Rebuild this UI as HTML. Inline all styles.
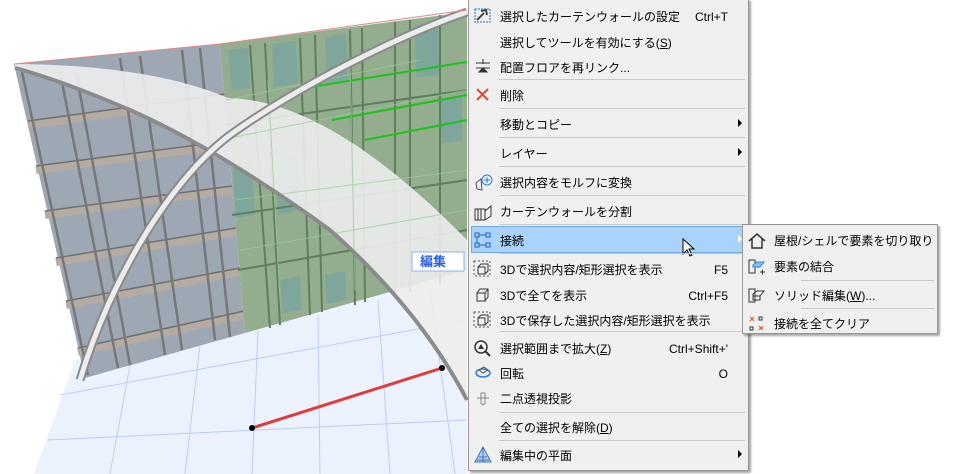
<!DOCTYPE html>
<html><head><meta charset="utf-8"><style>
*{margin:0;padding:0;box-sizing:border-box}
body{width:958px;height:474px;overflow:hidden;background:#fff;position:relative;font-family:"Liberation Sans","Noto Sans CJK JP",sans-serif;font-size:12px;color:#000}
.menu{position:absolute;left:468px;top:-1px;width:281px;height:472px;background:#f0f0f0;border:1px solid #979797;box-shadow:2px 2px 2px rgba(0,0,0,.35)}
.it{position:absolute;left:31px;white-space:nowrap;line-height:16px}
.sc{position:absolute;right:20px;white-space:nowrap;line-height:16px}
.sep{position:absolute;left:30px;right:3px;height:1px;background:#c8c8c8}
.arr{position:absolute;right:6px;width:0;height:0;border-left:4px solid #000;border-top:4px solid transparent;border-bottom:4px solid transparent}
.hl{position:absolute;left:2px;right:2px;top:226px;height:27px;background:#a9d3fb;border:1px solid #70a9e6}
.ic{position:absolute;left:4px}
.sub{position:absolute;left:742px;top:224px;width:196px;height:110px;background:#f0f0f0;border:1px solid #979797;box-shadow:2px 2px 2px rgba(0,0,0,.35)}
</style></head><body>
<svg width="470" height="474" style="position:absolute;left:0;top:0">
<polygon points="75,360 467,255 467,474 34,474" fill="#edf3fe"/>
<g stroke="#b9cdf5" stroke-width="1" fill="none">
<line x1="60" y1="395" x2="467" y2="320"/><line x1="48" y1="440" x2="467" y2="420"/>
<line x1="130" y1="365" x2="110" y2="474"/><line x1="200" y1="345" x2="185" y2="474"/>
<line x1="258" y1="330" x2="252" y2="474"/><line x1="318" y1="315" x2="320" y2="474"/>
<line x1="378" y1="300" x2="390" y2="474"/><line x1="430" y1="290" x2="455" y2="474"/>
</g>
<polygon points="14,64 220,44 245,333 85,378" fill="#9ea8b5"/>
<g stroke="#b4aca2" stroke-width="8">
<line x1="28" y1="125" x2="225" y2="98"/><line x1="36" y1="170" x2="228" y2="145"/>
<line x1="45" y1="215" x2="232" y2="190"/><line x1="56" y1="262" x2="236" y2="232"/><line x1="66" y1="305" x2="240" y2="272"/><line x1="78" y1="352" x2="244" y2="315"/>
</g>
<g stroke="#6f6f6f" stroke-width="1.5">
<line x1="28" y1="121" x2="225" y2="94"/><line x1="36" y1="166" x2="228" y2="141"/><line x1="45" y1="211" x2="232" y2="186"/><line x1="56" y1="258" x2="236" y2="228"/><line x1="66" y1="301" x2="240" y2="268"/><line x1="78" y1="348" x2="244" y2="311"/>
</g>
<g stroke="#777" stroke-width="2.5">
<line x1="22" y1="72" x2="88" y2="375"/><line x1="60" y1="72" x2="118" y2="368"/><line x1="76" y1="72" x2="130" y2="365"/>
<line x1="120" y1="58" x2="165" y2="355"/><line x1="140" y1="56" x2="182" y2="350"/><line x1="182" y1="50" x2="215" y2="340"/><line x1="200" y1="48" x2="230" y2="337"/>
</g>
<polygon points="220,44 467,12 467,270 245,333" fill="#93ad8e"/>
<g fill="#7fa69c">
<polygon points="228,50 248,48 250,88 232,90"/><polygon points="272,44 296,41 298,84 274,86"/><polygon points="325,37 346,34 348,80 327,82"/><polygon points="415,26 438,23 439,75 416,77"/>
<polygon points="233,168 252,165 255,215 236,218"/><polygon points="275,160 298,156 300,210 278,214"/><polygon points="325,275 345,271 346,300 326,304"/><polygon points="280,280 300,276 302,310 283,313"/>
<polygon points="440,100 462,96 462,140 441,144"/>
</g>
<g stroke="#5f7f5c" stroke-width="2">
<line x1="250" y1="45" x2="270" y2="328"/><line x1="265" y1="43" x2="280" y2="325"/><line x1="300" y1="38" x2="310" y2="315"/>
<line x1="315" y1="35" x2="322" y2="312"/><line x1="350" y1="30" x2="355" y2="305"/><line x1="362" y1="28" x2="365" y2="302"/>
<line x1="395" y1="22" x2="395" y2="295"/><line x1="410" y1="20" x2="410" y2="292"/><line x1="440" y1="15" x2="440" y2="285"/>
<line x1="225" y1="125" x2="467" y2="90"/><line x1="232" y1="215" x2="467" y2="180"/><line x1="238" y1="270" x2="467" y2="230"/>
</g>
<g stroke="#1bc41b" stroke-width="2"><line x1="292" y1="90" x2="467" y2="62"/><line x1="332" y1="120" x2="467" y2="95"/><line x1="365" y1="140" x2="467" y2="120"/><line x1="233" y1="165" x2="250" y2="162"/></g>
<path d="M15,64 Q150,65 228,98 Q330,100 467,240 L467,400 Q420,310 330,230 Q220,150 130,110 Q60,80 15,68Z" fill="#ededed" opacity="0.9"/>
<g stroke="#9c9" stroke-width="1" opacity=".7"><line x1="226" y1="100" x2="420" y2="60"/><line x1="230" y1="138" x2="467" y2="90"/><line x1="235" y1="200" x2="467" y2="170"/><line x1="240" y1="250" x2="467" y2="210"/><line x1="268" y1="80" x2="280" y2="300"/><line x1="350" y1="60" x2="355" y2="290"/></g>
<path d="M15,68 Q60,80 130,110 Q220,150 330,230 Q420,310 467,400" fill="none" stroke="#8b8b8b" stroke-width="4"/>
<path d="M80,380 C110,280 170,180 230,135 C300,85 400,35 467,12" fill="none" stroke="#8b8b8b" stroke-width="9"/>
<path d="M80,380 C110,280 170,180 230,135 C300,85 400,35 467,12" fill="none" stroke="#ececec" stroke-width="5"/>
<path d="M14,64 L220,44 L467,10" fill="none" stroke="#d88" stroke-width="1"/>
<rect x="412" y="252" width="52" height="19" fill="#fff" stroke="#8fb0f0"/>
<text x="420" y="266" font-size="13" fill="#2a5fd8" font-family="Noto Sans CJK JP,sans-serif" font-weight="bold">編集</text>
<line x1="252" y1="428" x2="442" y2="368" stroke="#e03c3c" stroke-width="3"/>
<circle cx="252" cy="428" r="3" fill="#000"/><circle cx="442" cy="368" r="3" fill="#000"/>
</svg>

<div class="menu">
<div class="hl"></div>
<svg class="ic" style="top:6px" width="20" height="20"><rect x="2" y="3" width="15" height="13" fill="none" stroke="#1c6fd0" stroke-dasharray="2,1"/><path d="M4,14 L11,7 M8,5 L13,4 L14,9" stroke="#444" stroke-width="2" fill="none"/></svg>
<div class="it" style="top:9px">選択したカーテンウォールの設定</div><div class="sc" style="top:9px">Ctrl+T</div>
<div class="it" style="top:35px">選択してツールを有効にする(<u>S</u>)</div>
<svg class="ic" style="top:58px" width="20" height="18"><path d="M3,5 H17 M10,1 V6 M3,10 H17 M6,14 H14 L10,10Z" stroke="#333" fill="#333"/></svg>
<div class="it" style="top:60px">配置フロアを再リンク...</div>
<div class="sep" style="top:79px"></div>
<svg class="ic" style="top:87px" width="20" height="16"><path d="M4,2 L15,13 M15,2 L4,13" stroke="#e8452c" stroke-width="2"/></svg>
<div class="it" style="top:88px">削除</div>
<div class="sep" style="top:108px"></div>
<div class="it" style="top:117px">移動とコピー</div><div class="arr" style="top:119px"></div>
<div class="sep" style="top:137px"></div>
<div class="it" style="top:146px">レイヤー</div><div class="arr" style="top:148px"></div>
<div class="sep" style="top:166px"></div>
<svg class="ic" style="top:173px" width="22" height="20"><circle cx="14" cy="7" r="5" fill="none" stroke="#2a7de0"/><path d="M14,4V10M11,7H17" stroke="#2a7de0"/><path d="M3,10 L8,6 L9,17 L4,16Z" fill="none" stroke="#555"/></svg>
<div class="it" style="top:175px">選択内容をモルフに変換</div>
<div class="sep" style="top:195px"></div>
<svg class="ic" style="top:203px" width="22" height="18"><path d="M2,6 H12 V17 H2Z M5,6 V17 M8,6V17 M12,8 L18,3 V13 L12,17" fill="none" stroke="#333"/></svg>
<div class="it" style="top:204px">カーテンウォールを分割</div>
<div class="sep" style="top:224px"></div>
<svg class="ic" style="top:231px" width="20" height="18"><rect x="2" y="2" width="4" height="4" fill="none" stroke="#1c5fb8"/><rect x="13" y="2" width="4" height="4" fill="none" stroke="#1c5fb8"/><rect x="2" y="12" width="4" height="4" fill="none" stroke="#1c5fb8"/><rect x="13" y="12" width="4" height="4" fill="none" stroke="#1c5fb8"/><path d="M6,4H13M4,6V12M6,14H13" stroke="#1c5fb8"/></svg>
<div class="it" style="top:233px">接続</div><div class="arr" style="top:235px;border-left-color:#fff"></div>
<svg style="position:absolute;left:213px;top:238px" width="14" height="20"><path d="M1,1 V16 L5,12 L8,18 L10,17 L7,11 H12Z" fill="#fff" stroke="#000"/></svg>
<div class="sep" style="top:253px"></div>
<svg class="ic" style="top:260px" width="20" height="18"><rect x="1" y="1" width="16" height="15" fill="none" stroke="#555" stroke-dasharray="2,2"/><path d="M5,7 H12 V14 H5Z M5,7 L8,4 H15 V11 L12,14" fill="none" stroke="#333"/></svg>
<div class="it" style="top:262px">3Dで選択内容/矩形選択を表示</div><div class="sc" style="top:262px">F5</div>
<svg class="ic" style="top:286px" width="20" height="18"><path d="M4,7 H12 V15 H4Z M4,7 L7,3 H15 V11 L12,15 M12,7 L15,3" fill="none" stroke="#333"/></svg>
<div class="it" style="top:288px">3Dで全てを表示</div><div class="sc" style="top:288px">Ctrl+F5</div>
<svg class="ic" style="top:311px" width="20" height="18"><rect x="1" y="1" width="16" height="15" fill="none" stroke="#555" stroke-dasharray="2,2"/><path d="M5,7 H12 V14 H5Z M5,7 L8,4 H15 V11 L12,14" fill="none" stroke="#333"/></svg>
<div class="it" style="top:313px">3Dで保存した選択内容/矩形選択を表示</div>
<div class="sep" style="top:331px"></div>
<svg class="ic" style="top:339px" width="20" height="20"><circle cx="8" cy="8" r="6" fill="none" stroke="#333" stroke-width="1.5"/><path d="M12,12 L17,17" stroke="#333" stroke-width="2"/><path d="M8,5 L5,10 H11Z" fill="#333"/></svg>
<div class="it" style="top:341px">選択範囲まで拡大(<u>Z</u>)</div><div class="sc" style="top:341px">Ctrl+Shift+'</div>
<svg class="ic" style="top:364px" width="20" height="18"><ellipse cx="10" cy="9" rx="7" ry="4" fill="none" stroke="#2a7de0" stroke-width="1.5"/><path d="M6,6 L11,3 L15,6 L10,9Z" fill="none" stroke="#555"/></svg>
<div class="it" style="top:366px">回転</div><div class="sc" style="top:366px">O</div>
<svg class="ic" style="top:389px" width="20" height="18"><path d="M4,9 H16 M8,4 V14 L10,16 L12,14 V4Z" fill="none" stroke="#888"/></svg>
<div class="it" style="top:391px">二点透視投影</div>
<div class="sep" style="top:412px"></div>
<div class="it" style="top:420px">全ての選択を解除(<u>D</u>)</div>
<div class="sep" style="top:440px"></div>
<svg class="ic" style="top:445px" width="20" height="20"><path d="M10,2 L2,17 H18Z" fill="#b9d4f5" stroke="#3a6fc0"/><path d="M6,12 H14 M4,15 H16 M10,2 V17" stroke="#3a6fc0"/></svg>
<div class="it" style="top:448px">編集中の平面</div><div class="arr" style="top:450px"></div>
</div>

<div class="sub">
<svg style="position:absolute;left:4px;top:7px" width="20" height="18"><path d="M2,9 L10,2 L18,9 M5,7 V16 H15 V7" fill="none" stroke="#333" stroke-width="1.5"/></svg>
<div class="it" style="left:31px;top:8px">屋根/シェルで要素を切り取り</div>
<svg style="position:absolute;left:4px;top:32px" width="20" height="20"><path d="M2,3 H8 V16 H2Z" fill="none" stroke="#333"/><path d="M6,8 L10,5 H17 L13,10 H6Z" fill="#8ec0f2" stroke="#2a7de0"/><path d="M13,15H18M15.5,12.5V17.5" stroke="#333"/></svg>
<div class="it" style="left:31px;top:34px">要素の結合</div>
<div class="sep" style="top:55px;left:58px"></div>
<svg style="position:absolute;left:4px;top:61px" width="20" height="20"><path d="M2,3 H8 V16 H2Z M6,8 L10,5 H17 L13,10 H6Z M6,10 V14 H13 V10" fill="none" stroke="#333"/></svg>
<div class="it" style="left:31px;top:63px">ソリッド編集(<u>W</u>)...</div>
<div class="sep" style="top:83px;left:58px"></div>
<svg style="position:absolute;left:4px;top:90px" width="20" height="18"><path d="M3,2 L7,6 M7,2 L3,6 M12,11 L16,15 M16,11 L12,15" stroke="#e8452c"/><rect x="12" y="2" width="3" height="3" fill="none" stroke="#333"/><rect x="3" y="12" width="3" height="3" fill="none" stroke="#333"/></svg>
<div class="it" style="left:31px;top:91px">接続を全てクリア</div>
</div>
</body></html>
